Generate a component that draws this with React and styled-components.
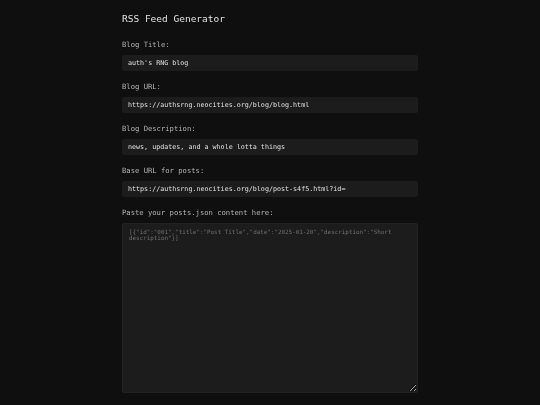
import React from "react";
import styled, { createGlobalStyle } from "styled-components";

const GlobalStyle = createGlobalStyle`
  html, body {
    margin: 0;
    background: #0f0f0f;
  }
  body {
    font-family: "DejaVu Sans Mono", "Liberation Mono", monospace;
    color: #d8d8d8;
    -webkit-font-smoothing: antialiased;
  }
`;

const Page = styled.main`
  max-width: 296px;
  margin: 0 auto;
  padding: 13px 0 24px;
  will-change: transform;
`;

const Title = styled.h1`
  margin: 0 0 15px;
  font-size: 9.5px;
  line-height: 12px;
  font-weight: normal;
  color: #e2e2e2;
`;

const Field = styled.div`
  display: flex;
  flex-direction: column;
  gap: 5px;
  margin-bottom: 11px;
`;

const Label = styled.label`
  font-size: 7.2px;
  line-height: 10px;
  color: #b4b4b4;
`;

const TextInput = styled.input`
  box-sizing: border-box;
  width: 100%;
  height: 16px;
  padding: 0 6px;
  border: none;
  border-radius: 2px;
  outline: none;
  background: #1c1c1c;
  color: #e0e0e0;
  font-family: inherit;
  font-size: 6.7px;
`;

const JsonArea = styled.textarea`
  box-sizing: border-box;
  width: 100%;
  height: 170px;
  padding: 5px 6px;
  border: 1px solid #222;
  border-radius: 2px;
  outline: none;
  background: #1c1c1c;
  color: #e0e0e0;
  font-family: inherit;
  font-size: 5.9px;
  &::placeholder {
    color: #6e6e6e;
  }
`;

const fields = [
  { id: "title", label: "Blog Title:", value: "auth's RNG blog" },
  { id: "url", label: "Blog URL:", value: "https://authsrng.neocities.org/blog/blog.html" },
  { id: "desc", label: "Blog Description:", value: "news, updates, and a whole lotta things" },
  { id: "base", label: "Base URL for posts:", value: "https://authsrng.neocities.org/blog/post-s4f5.html?id=" },
];

export default function App() {
  return (
    <>
      <GlobalStyle />
      <Page>
        <Title>RSS Feed Generator</Title>
        {fields.map((f) => (
          <Field key={f.id}>
            <Label htmlFor={f.id}>{f.label}</Label>
            <TextInput id={f.id} defaultValue={f.value} />
          </Field>
        ))}
        <Field>
          <Label htmlFor="json">Paste your posts.json content here:</Label>
          <JsonArea
            id="json"
            placeholder={'[{"id":"001","title":"Post Title","date":"2025-01-20","description":"Short description"}]'}
          />
        </Field>
      </Page>
    </>
  );
}
